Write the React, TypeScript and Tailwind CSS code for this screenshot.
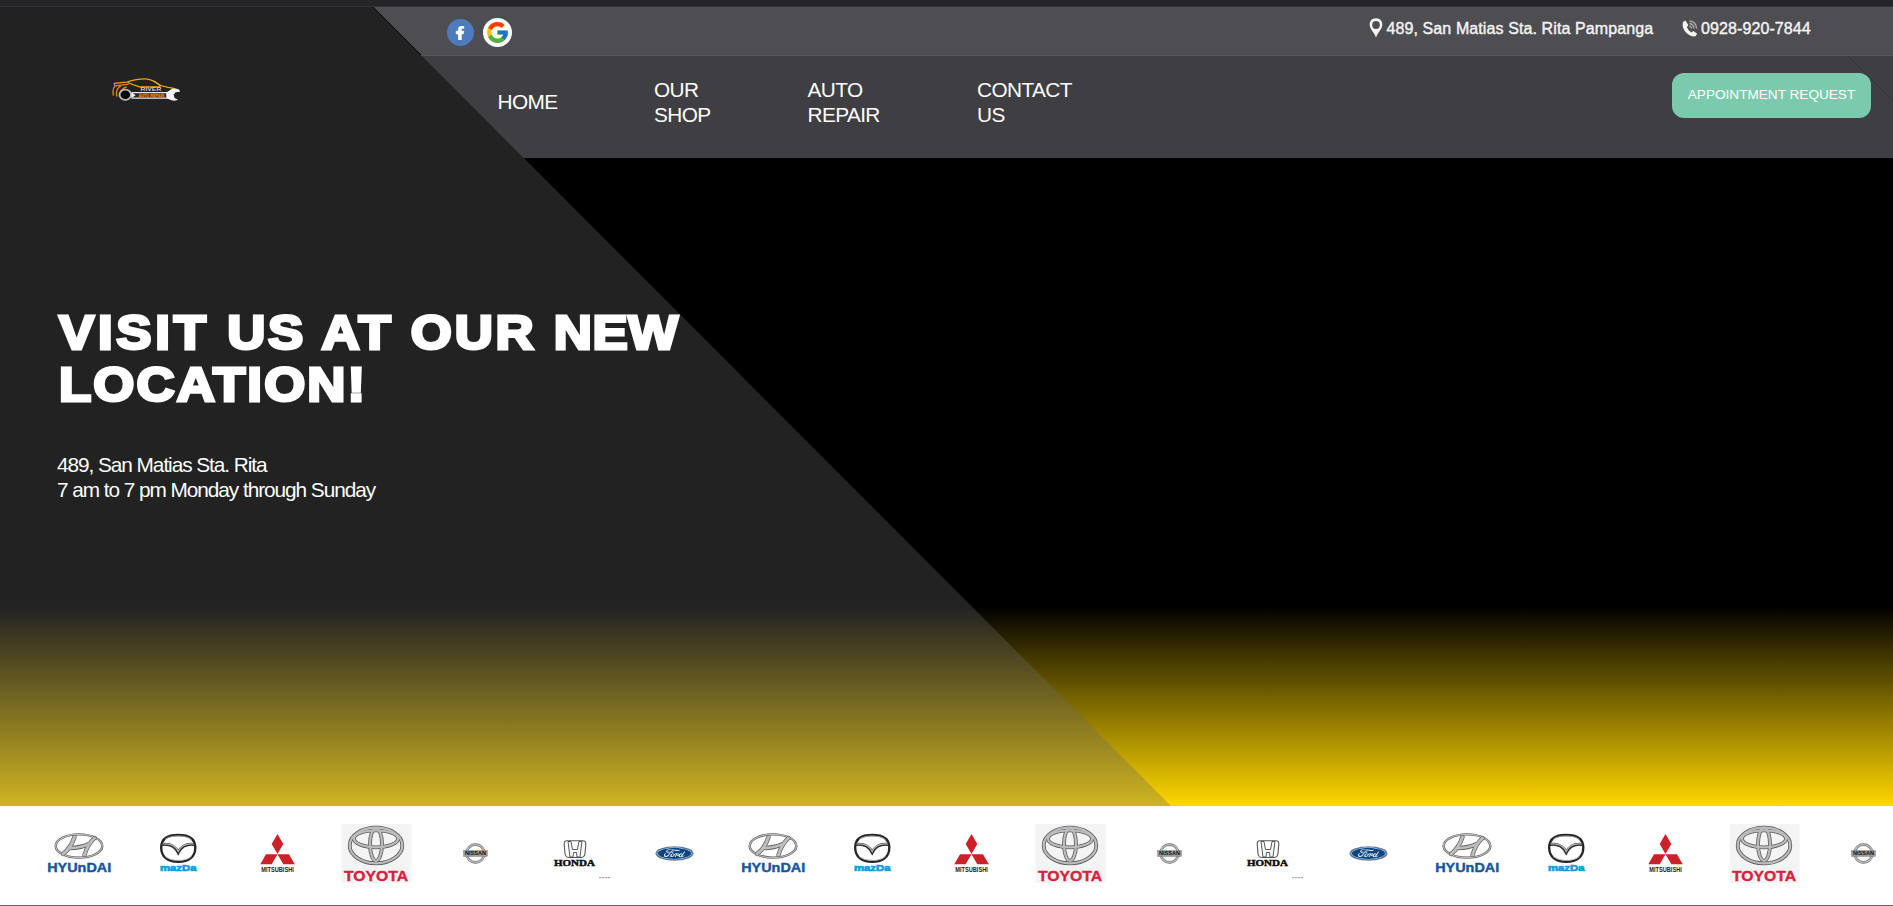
import type { ReactNode } from "react";
import { FcGoogle } from "react-icons/fc";
import { FaFacebookF } from "react-icons/fa";
import { SiFord } from "react-icons/si";

const navItems = [
  { label: ["HOME"], width: "w-[156.500px]" },
  { label: ["OUR", "SHOP"], width: "w-[153.500px]" },
  { label: ["AUTO", "REPAIR"], width: "w-[169.500px]" },
  { label: ["CONTACT", "US"], width: "w-[120px]" },
];

function RiverLogo() {
  return (
    <svg width="69" height="23" viewBox="0 0 70 26" preserveAspectRatio="none" fill="none">
      <path d="M2 6 L15 4.6 Q27 .4 36 1.2 Q42 2 49 8.5 L57 10.5 Q64 11.5 66 14" stroke="#e9a21d" strokeWidth="1.4" />
      <path d="M16 5 Q22 8 28 10 H49 M42 3.5 L50 9" stroke="#f0a818" strokeWidth="1.3" />
      <path d="M2 6 L3 9 L17 7 M3 9 Q0 13 1.5 20 M9 9 Q3 13 5 21 M15 10 Q8 12 7.5 21" stroke="#d98513" strokeWidth="1.4" />
      <path d="M20 16.500 H56 L60 15 M20 22.800 H56 L60 23.500" stroke="#e9e9ec" strokeWidth="1.4" />
      <circle cx="13.5" cy="19" r="5.8" fill="#050505" stroke="#b9b9bd" strokeWidth="1.9" />
      <path d="M19.500 16 L24 19.500 L19.500 23Z" fill="#f4f4f4" />
      <path d="M68 13 Q62 10 58 14.500 L55 17 V22 L58 24 Q62 27 67 24.500 L63.500 22.500 L62.500 19 L64.500 16 L69 15.500Z" fill="#f3f3f5" />
      <text x="29" y="14.900" fontSize="5" fontWeight="700" fill="#c9ccd6" textLength="21" lengthAdjust="spacingAndGlyphs">RIVER</text>
      <text x="27" y="21.200" fontSize="3.600" fontWeight="700" fill="#e0741a" stroke="#e0741a" strokeWidth=".3" textLength="26" lengthAdjust="spacingAndGlyphs">AUTO REPAIR</text>
    </svg>
  );
}

function Slot({ children }: { children: ReactNode }) {
  return (
    <svg className="h-[99px] w-[99.13px] shrink-0" viewBox="0 0 99.13 99" fontFamily="Liberation Sans" fontWeight="700">
      {children}
    </svg>
  );
}

function Chrome({ children, outer, inner }: { children: ReactNode; outer: number; inner: number }) {
  return (
    <g fill="none" strokeLinecap="round" strokeLinejoin="round">
      <g stroke="#5c5c5e" strokeWidth={outer}>{children}</g>
      <g stroke="#bdbdbf" strokeWidth={inner}>{children}</g>
    </g>
  );
}

function Hyundai() {
  return (
    <Slot>
      <Chrome outer={2.4} inner={1.2}>
        <ellipse cx="49" cy="40" rx="23.300" ry="11.600" />
      </Chrome>
      <Chrome outer={4.4} inner={3}>
        <path d="M44.500 31 Q41 42 33 48" />
        <path d="M64.500 32 Q57.500 38.500 54.500 49" />
        <path d="M40.500 42 Q50 42 59 38" />
      </Chrome>
      <text x="17.200" y="66.400" fontSize="13.500" fill="#15569c" stroke="#15569c" strokeWidth=".4" textLength="64" lengthAdjust="spacingAndGlyphs">HYUnDAI</text>
    </Slot>
  );
}

function Mazda() {
  return (
    <Slot>
      <path d="M49.200 29 C60 29 66.300 33 66.300 41.500 C66.300 50.500 60 55.800 49.200 55.800 C38.500 55.800 32.200 50.500 32.200 41.500 C32.200 33 38.500 29 49.200 29Z" fill="none" stroke="#242528" strokeWidth="2.400" />
      <path d="M33 38.500 Q44.500 37 49.200 46.500 Q54 37 65.500 38.500" fill="none" stroke="#2a2b2e" strokeWidth="3" />
      <path d="M33.500 38 Q45 36.500 49.200 45.500 Q53.500 36.500 65 38" fill="none" stroke="#b8babd" strokeWidth="1.200" />
      <path d="M36 33.500 Q40 30 49.200 30 Q58 30 62.500 33.500 M36 50.500 Q41 54.500 49.200 54.500 Q58 54.500 62.500 50.500" fill="none" stroke="#a8aaad" strokeWidth=".9" />
      <text x="31" y="65.500" fontSize="9.500" fill="#139ad8" stroke="#139ad8" strokeWidth=".7" textLength="36.500" lengthAdjust="spacingAndGlyphs">mazDa</text>
    </Slot>
  );
}

function Mitsubishi() {
  return (
    <Slot>
      <path d="M49.500 28 L55.300 38 L49.500 48 L43.700 38Z M49.500 48.300 L43.700 58.200 H32.300 L38 48.300Z M49.500 48.300 H61 L66.800 58.200 H55.300Z" fill="#cc2128" />
      <text x="33.300" y="66.300" fontSize="7" fill="#222" textLength="32.500" lengthAdjust="spacingAndGlyphs">MITSUBISHI</text>
    </Slot>
  );
}

function Toyota() {
  return (
    <Slot>
      <rect x="14.500" y="18" width="70" height="59" fill="#f4f4f4" />
      <Chrome outer={3.8} inner={2.2}>
        <ellipse cx="49" cy="39.500" rx="26.300" ry="17.800" />
        <ellipse cx="49" cy="32.800" rx="22" ry="8.500" />
        <ellipse cx="49" cy="38.300" rx="6" ry="16.500" />
      </Chrome>
      <text x="17" y="74.600" fontSize="15.500" fill="#d8213c" stroke="#d8213c" strokeWidth=".4" textLength="64" lengthAdjust="spacingAndGlyphs">TOYOTA</text>
    </Slot>
  );
}

function Nissan() {
  return (
    <Slot>
      <circle cx="49.500" cy="47.500" r="9" fill="none" stroke="#8c8c8e" strokeWidth="2.800" />
      <circle cx="49.500" cy="47.500" r="9" fill="none" stroke="#bcbcbe" strokeWidth="1.200" />
      <rect x="37.700" y="44.700" width="23.600" height="5.600" fill="#9c9c9c" stroke="#777" strokeWidth=".5" />
      <text x="39" y="49.500" fontSize="5.500" fill="#111" textLength="21" lengthAdjust="spacingAndGlyphs">NISSAN</text>
    </Slot>
  );
}

function Honda() {
  return (
    <Slot>
      <path d="M41 34.700 H57 Q60 34.700 59.800 38 L59 47.500 Q58.500 51.500 55 51.500 H43 Q39.500 51.500 39 47.500 L38.200 38 Q38 34.700 41 34.700Z" fill="none" stroke="#55575a" strokeWidth="1.100" />
      <path d="M42 35.500 L44 51 H47 L47.500 46.500 H50.500 L51 51 H54 L56 35.500 H53 L51.500 43.500 H46.500 L45 35.500Z" fill="#f7f7f7" stroke="#444649" strokeWidth=".9" />
      <text x="28" y="59.700" fontFamily="Liberation Serif" fontSize="8" fill="#0a0a0a" stroke="#0a0a0a" strokeWidth=".4" textLength="41" lengthAdjust="spacingAndGlyphs">HONDA</text>
      <path d="M73 71.700 H84" stroke="#999" strokeWidth="1" strokeDasharray="2.400 .5" />
    </Slot>
  );
}

function Ford() {
  return (
    <Slot>
      <ellipse cx="49.500" cy="47.500" rx="19" ry="7.300" fill="#6f8497" />
      <ellipse cx="49.500" cy="47.500" rx="17.800" ry="6.500" fill="#e8eef4" />
      <svg x="31.500" y="41" width="36" height="13" viewBox="0 7.500 24 9" preserveAspectRatio="none">
        <SiFord size={24} color="#0b4683" />
      </svg>
    </Slot>
  );
}

const brands = [Ford, Hyundai, Mazda, Mitsubishi, Toyota, Nissan, Honda];
const carousel = [...brands, ...brands, ...brands.slice(0, 6)];

export default function App() {
  return (
    <div className="relative flex h-[906px] w-full flex-col overflow-hidden bg-black font-['Liberation_Sans',Arial,sans-serif] text-white">
      <div className="h-[7px] shrink-0 border-b border-[#323136] bg-[#252429]" />

      <div className="relative flex h-[799px] shrink-0 flex-col bg-[linear-gradient(to_bottom,#000_75%,#ffd700_100%)]">
        <div className="h-[49px] shrink-0 border-b border-[#57565b] bg-[#4e4d51]" />
        <div className="h-[102px] shrink-0 bg-[#3f3e42]" />

        <svg className="absolute inset-0 h-full w-full" viewBox="0 0 1893 799">
          <defs>
            <linearGradient id="panel" x1="0" y1="0" x2="0" y2="1">
              <stop offset=".75" stopColor="#222222" />
              <stop offset="1" stopColor="#cfb422" />
            </linearGradient>
          </defs>
          <path d="M0 0 H373 L1171 799 H0Z" fill="url(#panel)" />
          <path d="M373 0 L421 48" stroke="#050505" strokeWidth="1" />
          <path d="M1848 49 L1893 94" stroke="#343337" strokeWidth=".8" />
        </svg>

        <div className="absolute inset-0 flex flex-col">
          <header className="flex h-[151px] shrink-0">
            <div className="w-[446.500px] shrink-0 pl-[112px] pt-[71px]">
              <RiverLogo />
            </div>
            <div className="flex min-w-0 flex-1 flex-col">
              <div className="flex h-[49px] items-start justify-between">
                <div className="flex items-center gap-[9px] pt-[10.500px]">
                  <span className="mt-px flex h-[27px] w-[27px] items-center justify-center rounded-full bg-[#4f7bbe]">
                    <FaFacebookF size={14} stroke="white" strokeWidth={30} />
                  </span>
                  <span className="flex h-[29px] w-[29px] items-center justify-center rounded-full bg-white">
                    <FcGoogle size={25} />
                  </span>
                </div>
                <div className="flex pr-[79.500px] pt-[11px] text-base leading-[20px] text-[#f4f4f4] [-webkit-text-stroke:0.4px_#f4f4f4]">
                  <svg className="mr-[4px] h-[20px] w-[14px]" viewBox="0 0 14 20">
                    <path fillRule="evenodd" d="M7 .3 C3 .3 .7 3.200 .7 6.500 C.7 11 5 14 7 19.500 C9 14 13.300 11 13.300 6.500 C13.300 3.200 11 .3 7 .3Z M7 2.900 A3.800 4 0 1 1 7 10.900 A3.800 4 0 1 1 7 2.900Z" fill="#f3f3f3" />
                  </svg>
                  <span className="mt-px w-[295.500px] whitespace-nowrap tracking-[0.1px]">489, San Matias Sta. Rita Pampanga</span>
                  <svg className="mr-[3px] mt-[2px] h-[17px] w-[16px]" viewBox="0 0 16 17">
                    <path d="M3.500 .6 L.9 2 Q-.3 8 4.300 12.700 Q8.500 17 13.500 16.300 L15.200 13.800 L11.400 10.900 L9.300 12.400 Q6.200 11 4.900 7.300 L6.300 5.100Z" fill="#f4f4f4" />
                    <path d="M7.500 1 Q14 1.500 14.600 8.600 M7.500 3.500 Q11.600 4 12 8.500 M7.500 6 Q9.400 6.500 9.600 8.500" stroke="#aaa9ac" strokeWidth="1.300" fill="none" />
                  </svg>
                  <span className="mt-px w-[112.500px] whitespace-nowrap tracking-[0.1px]">0928-920-7844</span>
                </div>
              </div>
              <div className="flex h-[102px] justify-between">
                <nav className="flex items-center pb-[11px] pl-[51px] text-[20.800px] leading-[25px] tracking-[-0.6px]">
                  {navItems.map((item) => (
                    <a key={item.label.join(" ")} className={item.width}>
                      {item.label.map((line) => (
                        <span key={line} className="block">{line}</span>
                      ))}
                    </a>
                  ))}
                </nav>
                <button className="mr-[22px] mt-[17px] h-[45px] w-[199px] whitespace-nowrap rounded-xl bg-[#7bcaae] text-[13.600px]">
                  APPOINTMENT REQUEST
                </button>
              </div>
            </div>
          </header>

          <section className="pl-[57px] pt-[149px]">
            <h1 className="ml-[1.500px] w-[640px] origin-left scale-x-110 whitespace-nowrap text-[48px] font-bold leading-[52px] [-webkit-text-stroke:3px_white]">
              <span className="block tracking-[2.500px]">
                <span className="tracking-[3.400px]">VISIT</span> US AT OUR <span className="tracking-[0.500px]">NEW</span>
              </span>
              <span className="block tracking-[1.900px]">LOCATION!</span>
            </h1>
            <p className="mt-[40.500px] text-[20.800px] leading-[25px] tracking-[-1.050px]">
              <span className="block">489, San Matias Sta. Rita</span>
              <span className="block">7 am to 7 pm Monday through Sunday</span>
            </p>
          </section>
        </div>
      </div>

      <div className="flex h-[100px] shrink-0 overflow-hidden border-b border-[#66666a] bg-white">
        <div className="ml-[-69.200px] flex shrink-0">
          {carousel.map((Brand, index) => (
            <Brand key={index} />
          ))}
        </div>
      </div>
    </div>
  );
}
